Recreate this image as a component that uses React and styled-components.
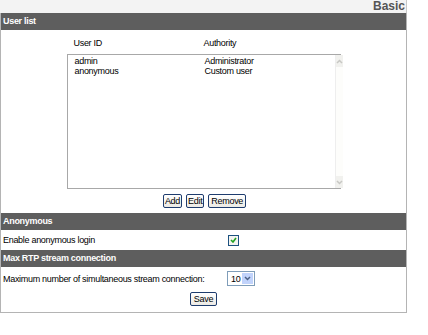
import React from 'react';
import styled, { createGlobalStyle } from 'styled-components';

const GlobalStyle = createGlobalStyle`
  body {
    margin: 0;
    background: #fff;
    font-family: "Liberation Sans", Arial, sans-serif;
    font-size: 9px;
    letter-spacing: -0.3px;
    color: #000;
  }
`;

const Page = styled.div`
  width: 407px;
`;

const TitleBar = styled.div`
  height: 13px;
  background: #f3f3f3;
  text-align: right;
  font-weight: bold;
  font-size: 12px;
  letter-spacing: 0;
  line-height: 13px;
  color: #555;
  padding-right: 1px;
  border-right: 1px solid #c8c8c8;
`;

const Panel = styled.div`
  border: 1px solid #b4b4b4;
  border-top: none;
`;

const SectionHeader = styled.div`
  height: 17px;
  line-height: 17px;
  background: #5e5e5e;
  color: #fff;
  font-weight: bold;
  padding-left: 2px;
`;

const UserBlock = styled.div`
  display: flex;
  flex-direction: column;
  align-items: center;
  padding: 6px 0 5px;
`;

const ColumnHeads = styled.div`
  width: 274px;
  display: flex;
  height: 14px;
  line-height: 14px;
  margin-bottom: 4px;
`;

const Col = styled.div`
  width: ${p => p.$w}px;
  padding-left: 7px;
`;

const ListBox = styled.div`
  width: 272px;
  height: 133px;
  border: 1px solid #a8a8a8;
  display: flex;
`;

const ListItems = styled.div`
  flex: 1;
  padding-top: 1px;
`;

const ListRow = styled.div`
  display: flex;
  height: 10px;
  line-height: 10px;
`;

const ScrollBar = styled.div`
  width: 12px;
  background: #fdfdfb;
  border-left: 1px solid #eee;
  display: flex;
  flex-direction: column;
  justify-content: space-between;
`;

const ScrollBtn = styled.div`
  height: 12px;
  background: #f1f1ee;
  display: flex;
  align-items: center;
  justify-content: center;
`;

const Buttons = styled.div`
  display: flex;
  gap: 4px;
  margin-top: 5px;
  margin-left: 2px;
`;

const Button = styled.button`
  font-family: "Liberation Sans", Arial, sans-serif;
  font-size: 9px;
  letter-spacing: -0.3px;
  height: 14px;
  padding: 0 ${p => p.$pad || 1}px;
  background: linear-gradient(#fff, #eceae4);
  border: 1px solid #1e3c6e;
  border-radius: 2px;
  color: #000;
  line-height: 12px;
`;

const FieldRow = styled.div`
  display: flex;
  align-items: center;
  height: ${p => p.$h}px;
  padding-left: 2px;
`;

const Label = styled.div`
  width: 224px;
`;

const Check = styled.div`
  width: 9px;
  height: 9px;
  border: 1px solid #1c5180;
  background: #f4f4f0;
  display: flex;
  align-items: center;
  justify-content: center;
  margin-left: 1px;
`;

const Select = styled.div`
  width: 26px;
  height: 13px;
  border: 1px solid #7f9db9;
  display: flex;
  align-items: center;
  background: #fff;
`;

const SelectValue = styled.div`
  flex: 1;
  padding-left: 3px;
`;

const SelectArrow = styled.div`
  width: 11px;
  height: 11px;
  margin-right: 1px;
  background: #c1d3fb;
  display: flex;
  align-items: center;
  justify-content: center;
`;

const SaveRow = styled.div`
  display: flex;
  justify-content: center;
  padding: 2px 0 6px;
`;

const Arrow = ({ up, color }) => (
  <svg width="7" height="5" viewBox="0 0 7 5">
    <path d={up ? 'M1 4 L3.5 1.5 L6 4' : 'M1 1 L3.5 3.5 L6 1'} fill="none" stroke={color} strokeWidth="1.5" />
  </svg>
);

const users = [
  { id: 'admin', auth: 'Administrator' },
  { id: 'anonymous', auth: 'Custom user' },
];

export default function App() {
  return (
    <Page>
      <GlobalStyle />
      <TitleBar>Basic</TitleBar>
      <Panel>
        <SectionHeader>User list</SectionHeader>
        <UserBlock>
          <ColumnHeads>
            <Col $w={123}>User ID</Col>
            <Col $w={130}>Authority</Col>
          </ColumnHeads>
          <ListBox>
            <ListItems>
              {users.map(u => (
                <ListRow key={u.id}>
                  <Col $w={123}>{u.id}</Col>
                  <Col $w={130}>{u.auth}</Col>
                </ListRow>
              ))}
            </ListItems>
            <ScrollBar>
              <ScrollBtn><Arrow up color="#c8c8c4" /></ScrollBtn>
              <ScrollBtn><Arrow color="#c8c8c4" /></ScrollBtn>
            </ScrollBar>
          </ListBox>
          <Buttons>
            <Button>Add</Button>
            <Button>Edit</Button>
            <Button $pad={2}>Remove</Button>
          </Buttons>
        </UserBlock>
        <SectionHeader>Anonymous</SectionHeader>
        <FieldRow $h={20}>
          <Label>Enable anonymous login</Label>
          <Check>
            <svg width="7" height="6" viewBox="0 0 7 6">
              <path d="M1 3 L3 5 L6 1" fill="none" stroke="#21a121" strokeWidth="1.6" />
            </svg>
          </Check>
        </FieldRow>
        <SectionHeader>Max RTP stream connection</SectionHeader>
        <FieldRow $h={23}>
          <Label>Maximum number of simultaneous stream connection:</Label>
          <Select>
            <SelectValue>10</SelectValue>
            <SelectArrow><Arrow color="#4d6185" /></SelectArrow>
          </Select>
        </FieldRow>
        <SaveRow>
          <Button $pad={3}>Save</Button>
        </SaveRow>
      </Panel>
    </Page>
  );
}
